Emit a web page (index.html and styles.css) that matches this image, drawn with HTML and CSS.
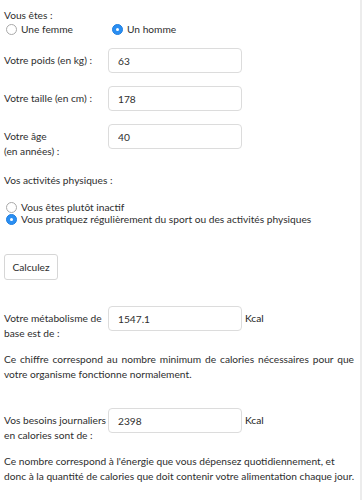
FILE: index.html
```html
<!DOCTYPE html>
<html lang="fr">
<head>
    <meta charset="UTF-8">
    <meta name="viewport" content="width=device-width, initial-scale=1.0">
    <title>Calcul du métabolisme</title>
    <link rel="stylesheet" href="styles.css">
</head>
<body>
    <div class="page">

        <!-- Sexe -->
        <div class="question">Vous êtes :</div>
        <div class="radio-row">
            <label class="radio radio-first"><span class="dot"></span>Une femme</label>
            <label class="radio"><span class="dot checked"></span>Un homme</label>
        </div>

        <!-- Mesures -->
        <div class="field field-first">
            <label class="lbl">Votre poids (en kg) :</label>
            <input class="inp" type="text" value="63">
        </div>
        <div class="field">
            <label class="lbl">Votre taille (en cm) :</label>
            <input class="inp" type="text" value="178">
        </div>
        <div class="field">
            <label class="lbl">Votre âge<br>(en années) :</label>
            <input class="inp" type="text" value="40">
        </div>

        <!-- Activités -->
        <div class="question activities">Vos activités physiques :</div>
        <div class="radio-list">
            <label class="radio"><span class="dot"></span>Vous êtes plutôt inactif</label>
            <label class="radio"><span class="dot checked"></span>Vous pratiquez régulièrement du sport ou des activités physiques</label>
        </div>

        <button class="btn">Calculez</button>

        <!-- Résultats -->
        <div class="field result">
            <label class="lbl">Votre métabolisme de base est de :</label>
            <input class="inp" type="text" value="1547.1">
            <span class="unit">Kcal</span>
        </div>
        <p class="note note-first">Ce chiffre correspond au nombre minimum de calories nécessaires pour que votre organisme fonctionne normalement.</p>

        <div class="field result">
            <label class="lbl">Vos besoins journaliers en calories sont de :</label>
            <input class="inp" type="text" value="2398">
            <span class="unit">Kcal</span>
        </div>
        <p class="note">Ce nombre correspond à l'énergie que vous dépensez quotidiennement, et<br>donc à la quantité de calories que doit contenir votre alimentation chaque jour.</p>

    </div>
</body>
</html>
```

FILE: styles.css
```css
body {
    margin: 0;
    font-family: Lato, "Open Sans", sans-serif;
    font-size: 10.2px;
    color: #2e2e2e;
    background: #fff;
}

.page {
    width: 362px;
    min-height: 500px;
    padding: 8px 0 0 4px;
    border-right: 2px solid #ececec;
    box-sizing: border-box;
}

.question {
    line-height: 14px;
}

/* Radios */
.radio-row {
    display: flex;
    line-height: 14px;
}

.radio {
    display: flex;
    align-items: center;
    cursor: pointer;
}

.radio-first {
    width: 106px;
    padding-left: 2px;
}

.dot {
    width: 9px;
    height: 9px;
    border: 1px solid #a9a9a9;
    border-radius: 50%;
    background: #fff;
    margin-right: 4px;
    box-sizing: content-box;
    position: relative;
}

.dot.checked {
    background: #2a8ef2;
    border-color: #1f7fe0;
}

.dot.checked::after {
    content: "";
    position: absolute;
    width: 3px;
    height: 3px;
    border-radius: 50%;
    background: #fff;
    top: 3px;
    left: 3px;
}

.radio-list {
    margin-top: 13px;
    padding-left: 2px;
}

.radio-list .radio {
    line-height: 12px;
}

/* Fields */
.field {
    display: flex;
    align-items: flex-start;
    margin-top: 13px;
}

.field-first {
    margin-top: 12px;
}

.lbl {
    width: 104px;
    padding-top: 5px;
    line-height: 15px;
}

.inp {
    width: 134px;
    height: 25px;
    box-sizing: border-box;
    border: 1px solid #dcdcdc;
    border-radius: 4px;
    padding: 0 9px;
    font-family: Lato, "Open Sans", sans-serif;
    font-size: 10.2px;
    color: #2e2e2e;
    background: #fff;
    outline: none;
}

.activities {
    margin-top: 14px;
    line-height: 15px;
}

.btn {
    display: block;
    margin-top: 29px;
    width: 54px;
    height: 26px;
    border: 1px solid #d6d6d6;
    border-radius: 3px;
    background: #fff;
    font-family: Lato, "Open Sans", sans-serif;
    font-size: 10.2px;
    color: #2e2e2e;
    padding: 0;
    cursor: pointer;
}

.result {
    margin-top: 26px;
}

.unit {
    padding-left: 3px;
    line-height: 25px;
    color: #222;
}

.note {
    margin: 11px 0 0;
    line-height: 15px;
    padding-right: 0;
    white-space: nowrap;
}

.note-first {
    text-align: justify;
    white-space: normal;
    padding-right: 6px;
}
```
